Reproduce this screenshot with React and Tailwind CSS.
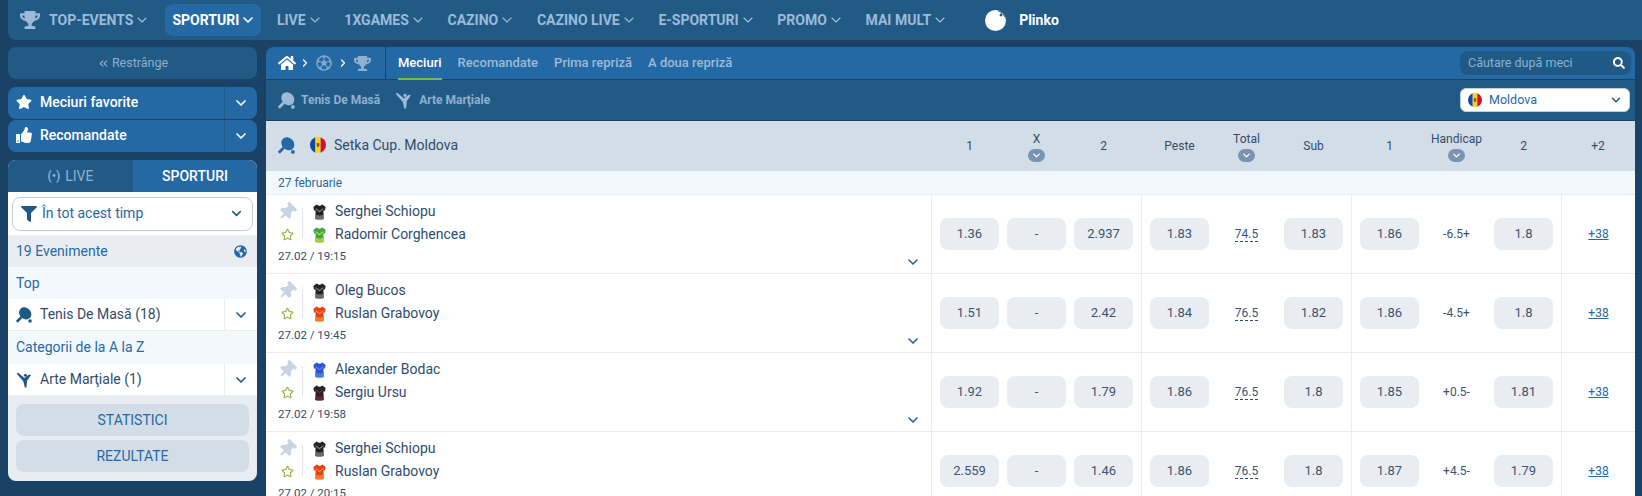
import { ChevronDown, ChevronsLeft, ChevronRight } from 'lucide-react';
import {
  FaHome, FaTrophy, FaRegFutbol, FaStar, FaRegStar, FaThumbsUp, FaFilter, FaSearch,
  FaThumbtack, FaGlobeAmericas,
} from 'react-icons/fa';

const navItems = ['LIVE', '1XGAMES', 'CAZINO', 'CAZINO LIVE', 'E-SPORTURI', 'PROMO', 'MAI MULT'];

const matches = [
  {
    p1: 'Serghei Schiopu', s1: ['#222222', '#8a8a8a'], p2: 'Radomir Corghencea', s2: ['#3fa648', '#d4dc3a'],
    time: '27.02 / 19:15', odds: ['1.36', '-', '2.937'], over: '1.83', total: '74.5', under: '1.83',
    h1: '1.86', hcp: '-6.5+', h2: '1.8',
  },
  {
    p1: 'Oleg Bucos', s1: ['#222222', '#8a8a8a'], p2: 'Ruslan Grabovoy', s2: ['#e8401c', '#f59a23'],
    time: '27.02 / 19:45', odds: ['1.51', '-', '2.42'], over: '1.84', total: '76.5', under: '1.82',
    h1: '1.86', hcp: '-4.5+', h2: '1.8',
  },
  {
    p1: 'Alexander Bodac', s1: ['#2b56cf', '#5f86ea'], p2: 'Sergiu Ursu', s2: ['#26222b', '#8c2334'],
    time: '27.02 / 19:58', odds: ['1.92', '-', '1.79'], over: '1.86', total: '76.5', under: '1.8',
    h1: '1.85', hcp: '+0.5-', h2: '1.81',
  },
  {
    p1: 'Serghei Schiopu', s1: ['#222222', '#8a8a8a'], p2: 'Ruslan Grabovoy', s2: ['#e8401c', '#f59a23'],
    time: '27.02 / 20:15', odds: ['2.559', '-', '1.46'], over: '1.86', total: '76.5', under: '1.8',
    h1: '1.87', hcp: '+4.5-', h2: '1.79',
  },
];

const PingPong = ({ size = 17, color }) => (
  <svg width={size} height={size} viewBox="0 0 16 16" className="shrink-0">
    <ellipse cx="9.2" cy="6.4" rx="6.6" ry="5.6" transform="rotate(45 9.2 6.4)" fill={color} />
    <path d="M5.4 10.2 L0.8 14.8" stroke={color} strokeWidth="2.6" />
    <circle cx="14" cy="14" r="1.8" fill={color} />
  </svg>
);

const Kick = ({ size = 17, color }) => (
  <svg width={size} height={size} viewBox="0 0 16 16" className="shrink-0">
    <path d="M0.6 1.6 L2.2 0.8 L8.4 6 L13 2.6 L15 3 L11.2 8.4 L10.4 15.6 L8.8 15.6 L7.4 9.4 Z" fill={color} />
    <circle cx="9.4" cy="3.2" r="1.5" fill={color} />
  </svg>
);

const Shirt = ({ colors }) => (
  <svg width="13" height="16" viewBox="0 0 13 16">
    <path d="M3.6 0.5 L5 1.2 Q6.5 2.4 8 1.2 L9.4 0.5 L12.6 3 L12 6.6 L10.4 6.4 L10.8 15 Q6.5 16.2 2.2 15 L2.6 6.4 L1 6.6 L0.4 3 Z" fill={colors[0]} />
    <path d="M2.6 4.6 L6.5 7.6 L10.4 4.6" stroke={colors[1]} strokeWidth="1.1" fill="none" />
    <path d="M2.5 10.5 Q6.5 12.5 10.6 10.5 L10.8 15 Q6.5 16.2 2.2 15 Z" fill={colors[1]} opacity="0.7" />
  </svg>
);

const Flag = ({ size = 16 }) => (
  <svg width={size} height={size} viewBox="0 0 16 16" className="shrink-0">
    <clipPath id="flag-clip"><circle cx="8" cy="8" r="8" /></clipPath>
    <g clipPath="url(#flag-clip)">
      <rect width="5.4" height="16" fill="#0b4aa8" />
      <rect x="5.4" width="5.2" height="16" fill="#fcd116" />
      <rect x="10.6" width="5.4" height="16" fill="#d21034" />
      <path d="M6.6 6h2.8v3L8 10.6 6.6 9z" fill="#8a5a2b" />
    </g>
  </svg>
);

const Ball = () => (
  <svg width="21" height="21" viewBox="0 0 21 21">
    <circle cx="10.5" cy="10.5" r="10.5" fill="#ffffff" />
    <path d="M13 0.6 Q18 2 20 7" stroke="#215a85" strokeWidth="1" fill="none" />
    <circle cx="16" cy="5" r="1.4" fill="#215a85" />
  </svg>
);

const NavChevron = ({ strokeWidth = 1.75 }) => (
  <ChevronDown size={16} strokeWidth={strokeWidth} className="ml-[1px] -mr-[2px]" />
);

const Odd = ({ value }) => (
  <button className="w-[59px] h-[32px] rounded-lg bg-[#e9edf1] text-[13px] text-[#3a5472]">{value}</button>
);

const MidValue = ({ children }) => (
  <div className="w-[59px] text-center text-[12px] text-[#3a5472]">{children}</div>
);

const ColHead = ({ label, pill }) => (
  <div className="w-[59px] flex flex-col items-center justify-center text-[12px] text-[#2f4c6e]">
    <span className={pill ? 'h-[16px] leading-[16px] whitespace-nowrap' : ''}>{label}</span>
    {pill && (
      <span className="w-[17px] h-[13px] rounded-full bg-[#7795b3] flex items-center justify-center mt-[2px]">
        <ChevronDown size={11} strokeWidth={3} color="#ffffff" />
      </span>
    )}
  </div>
);

const MatchRow = ({ m }) => (
  <div className="flex h-[79px] shrink-0 border-b border-[#e9edf1] bg-white">
    <div className="w-[665px] flex pl-3">
      <div className="flex flex-col pt-[5px]">
        <div className="flex">
          <div className="w-[24px] flex flex-col">
            <div className="h-[23px] flex items-center"><FaThumbtack size={18} color="#c7d4e2" className="rotate-45" /></div>
            <div className="h-[23px] flex items-center pl-[3px]"><FaRegStar size={13} color="#95b33f" /></div>
          </div>
          <div className="w-px h-[31px] self-center bg-[#dfe5eb]" />
          <div className="w-[33px] flex flex-col pl-[10px]">
            <div className="h-[23px] flex items-center"><Shirt colors={m.s1} /></div>
            <div className="h-[23px] flex items-center"><Shirt colors={m.s2} /></div>
          </div>
          <div className="flex flex-col text-[14px] text-[#2f4c6e] -ml-px">
            <div className="h-[23px] leading-[22px]">{m.p1}</div>
            <div className="h-[23px] leading-[23px]">{m.p2}</div>
          </div>
        </div>
        <div className="mt-[2px] text-[11.5px] leading-[16px] text-[#2f4c6e]">{m.time}</div>
      </div>
      <div className="ml-auto self-end mb-[3px] mr-[10px]">
        <ChevronDown size={16} strokeWidth={2.5} color="#2569a4" />
      </div>
    </div>
    <div className="w-[210px] flex items-center gap-2 pl-2 border-l border-[#e9edf1]">
      <Odd value={m.odds[0]} />
      <Odd value={m.odds[1]} />
      <Odd value={m.odds[2]} />
    </div>
    <div className="w-[210px] flex items-center gap-2 pl-2 border-l border-[#e9edf1]">
      <Odd value={m.over} />
      <MidValue><span className="border-b border-dashed border-[#2f4c6e]">{m.total}</span></MidValue>
      <Odd value={m.under} />
    </div>
    <div className="w-[210px] flex items-center gap-2 pl-2 border-l border-[#e9edf1]">
      <Odd value={m.h1} />
      <MidValue>{m.hcp}</MidValue>
      <Odd value={m.h2} />
    </div>
    <div className="w-[74px] flex items-center justify-center border-l border-[#e9edf1]">
      <a className="text-[12px] text-[#2569a4] underline">+38</a>
    </div>
  </div>
);

const SideAccordion = ({ icon, label }) => (
  <div className="flex h-[32px] rounded-lg bg-[#2569a4] text-white">
    <div className="flex-1 flex items-center gap-2 pl-2 pb-[2px] text-[14px] font-medium">{icon}{label}</div>
    <div className="w-[33px] flex items-center justify-center border-l border-[#1f5a87]">
      <ChevronDown size={16} strokeWidth={2.5} />
    </div>
  </div>
);

const SideSport = ({ icon, label }) => (
  <div className="flex h-[32px] bg-white text-[14px] text-[#2f4c6e] border-b border-[#e9edf1]">
    <div className="flex-1 flex items-center gap-2 pl-2">{icon}{label}</div>
    <div className="w-[33px] flex items-center justify-center border-l border-[#e9edf1]">
      <ChevronDown size={16} strokeWidth={2.5} color="#1f5a87" />
    </div>
  </div>
);

const Sidebar = () => (
  <aside className="w-[249px] shrink-0 flex flex-col">
    <div className="h-[32px] rounded-lg bg-[#215a85] flex items-center justify-center gap-[2px] text-[12.5px] text-[#8fb0cf]">
      <ChevronsLeft size={13} />Restrânge
    </div>
    <div className="mt-2 flex flex-col gap-px">
      <SideAccordion icon={<FaStar size={16} />} label="Meciuri favorite" />
      <SideAccordion icon={<FaThumbsUp size={16} />} label="Recomandate" />
    </div>
    <div className="mt-2 rounded-lg overflow-hidden bg-[#e9edf1]">
      <div className="flex h-[32px] text-[14px]">
        <div className="w-[125px] bg-[#215a85] text-[#8fb0cf] flex items-center justify-center gap-[5px]">
          <span className="text-[12px] font-bold">(•)</span>LIVE
        </div>
        <div className="flex-1 bg-[#2569a4] text-white font-medium flex items-center justify-center">SPORTURI</div>
      </div>
      <div className="bg-white h-[43px] px-1 flex items-center">
        <div className="w-full h-[34px] rounded-lg border border-[#c3cfdb] flex items-center pl-2 pr-2 gap-[5px] text-[14px] text-[#2569a4]">
          <FaFilter size={16} color="#1f5a87" />
          <span className="flex-1">În tot acest timp</span>
          <ChevronDown size={15} strokeWidth={2.5} color="#1f5a87" />
        </div>
      </div>
      <div className="h-[32px] flex items-center justify-between pl-2 pr-[10px] text-[14px] text-[#2569a4]">
        19 Evenimente
        <FaGlobeAmericas size={13} color="#2569a4" />
      </div>
      <div className="h-[32px] flex items-center pl-2 bg-[#f3f8fd] text-[14px] text-[#2569a4]">Top</div>
      <SideSport icon={<PingPong size={16} color="#1f5a87" />} label="Tenis De Masă (18)" />
      <div className="h-[33px] flex items-center pl-2 bg-[#f3f8fd] text-[14px] text-[#2569a4]">Categorii de la A la Z</div>
      <SideSport icon={<Kick size={16} color="#1f5a87" />} label="Arte Marţiale (1)" />
      <div className="px-2 pt-2 pb-[9px] flex flex-col gap-1">
        <button className="h-[32px] rounded-lg bg-[#d3dde7] text-[14px] text-[#2569a4]">STATISTICI</button>
        <button className="h-[32px] rounded-lg bg-[#d3dde7] text-[14px] text-[#2569a4]">REZULTATE</button>
      </div>
    </div>
  </aside>
);

const MainPanel = () => (
  <main className="w-[1369px] shrink-0 flex flex-col rounded-t-lg overflow-hidden">
    <div className="h-[33px] shrink-0 bg-[#2569a4] border-b border-[#1a4166] flex items-stretch text-[13px]">
      <div className="w-[120px] pl-3 flex items-center border-r border-[#1a4166] shrink-0">
        <FaHome size={18} color="#ffffff" />
        <ChevronRight size={12} strokeWidth={2.5} color="#ffffff" className="ml-[3px]" />
        <FaRegFutbol size={16} color="#7fa5c9" className="ml-[5px]" />
        <ChevronRight size={12} strokeWidth={2.5} color="#ffffff" className="ml-[5px]" />
        <FaTrophy size={17} color="#8fb0cf" className="ml-[5px]" />
      </div>
      <div className="flex-1 flex items-stretch pl-3 gap-4 font-medium text-[#9dbbd8]">
        <span className="flex items-center text-white border-b-2 border-[#7ab648] mb-[-1px]">Meciuri</span>
        <span className="flex items-center">Recomandate</span>
        <span className="flex items-center">Prima repriză</span>
        <span className="flex items-center">A doua repriză</span>
      </div>
      <div className="flex items-center pr-1">
        <div className="w-[171px] h-[24px] rounded-lg bg-[#1f5a87] flex items-center justify-between pl-2 pr-[6px] text-[12.5px] text-[#8fb0cf]">
          Căutare după meci
          <FaSearch size={12} color="#ffffff" />
        </div>
      </div>
    </div>
    <div className="h-[41px] shrink-0 bg-[#215a85] border-b border-[#1a4166] flex items-center pl-3 pr-[5px] text-[12px] font-bold text-[#8fb0cf]">
      <PingPong size={17} color="#9dbbd8" />
      <span className="ml-[6px]">Tenis De Masă</span>
      <span className="ml-[15px]"><Kick size={17} color="#9dbbd8" /></span>
      <span className="ml-[7px]">Arte Marţiale</span>
      <div className="ml-auto w-[170px] h-[24px] rounded-md bg-white border border-[#c3cfdb] flex items-center pl-[7px] pr-[6px] gap-[7px] font-normal text-[12.5px] text-[#2569a4]">
        <Flag size={14} />
        <span className="flex-1">Moldova</span>
        <ChevronDown size={14} strokeWidth={2.5} color="#1f5a87" />
      </div>
    </div>
    <div className="h-[50px] shrink-0 bg-[#d3dde7] flex">
      <div className="w-[665px] flex items-center pl-3 pb-[2px] text-[14px] text-[#2f4c6e]">
        <PingPong size={17} color="#2569a4" />
        <span className="ml-[15px]"><Flag /></span>
        <span className="ml-2">Setka Cup. Moldova</span>
      </div>
      <div className="w-[210px] flex gap-2 pl-[9px]">
        <ColHead label="1" /><ColHead label="X" pill /><ColHead label="2" />
      </div>
      <div className="w-[210px] flex gap-2 pl-[9px]">
        <ColHead label="Peste" /><ColHead label="Total" pill /><ColHead label="Sub" />
      </div>
      <div className="w-[210px] flex gap-2 pl-[9px]">
        <ColHead label="1" /><ColHead label="Handicap" pill /><ColHead label="2" />
      </div>
      <div className="w-[74px] flex items-center justify-center text-[12px] text-[#2f4c6e]">+2</div>
    </div>
    <div className="h-[24px] shrink-0 bg-[#f3f8fd] border-b border-[#e9edf1] flex items-center pl-3 pt-[1px] text-[12px] text-[#2569a4]">27 februarie</div>
    {matches.map((m, i) => (
      <MatchRow key={i} m={m} />
    ))}
  </main>
);

const App = () => {
  return (
    <div className="h-[496px] w-[1642px] overflow-hidden bg-[#1a4166] font-['Roboto',sans-serif]">
      <header className="ml-2 h-[40px] rounded-bl-lg bg-[#215a85] flex items-center text-[14px] font-bold text-[#9dbbd8]">
        <div className="flex items-center h-[32px] pl-3 pr-[9px]">
          <FaTrophy size={20} color="#9dbbd8" />
          <span className="ml-[9px]">TOP-EVENTS</span>
          <NavChevron />
        </div>
        <div className="ml-2 flex items-center h-[32px] px-[7px] rounded-lg bg-[#2569a4] text-white">
          SPORTURI
          <NavChevron strokeWidth={2.5} />
        </div>
        {navItems.map((item) => (
          <div key={item} className="ml-[7.7px] flex items-center h-[32px] px-2">
            {item}
            <NavChevron />
          </div>
        ))}
        <div className="ml-[31px] flex items-center text-white">
          <Ball />
          <span className="ml-[13px]">Plinko</span>
        </div>
      </header>
      <div className="flex gap-[9px] pl-2 pt-[7px]">
        <Sidebar />
        <MainPanel />
      </div>
    </div>
  );
};

export default App;
